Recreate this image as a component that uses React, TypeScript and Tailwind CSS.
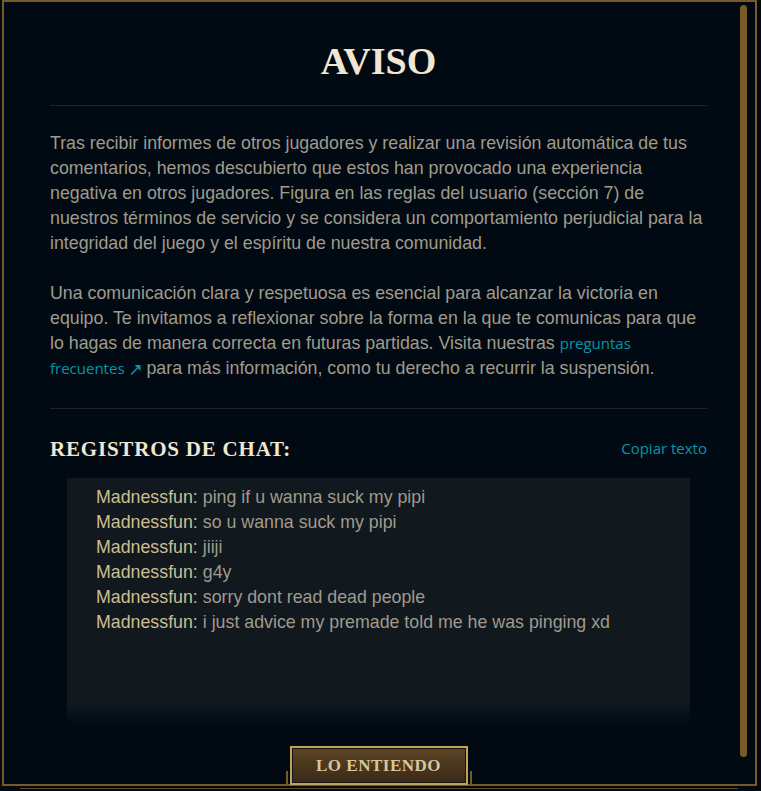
import React from "react";

const serif = "font-['Liberation_Serif',serif]";
const sans = "font-['Liberation_Sans',Arial,sans-serif]";
const uiSans = "font-['Open_Sans','Noto_Sans',sans-serif]";

const chatLines = [
  "ping if u wanna suck my pipi",
  "so u wanna suck my pipi",
  "jiiji",
  "g4y",
  "sorry dont read dead people",
  "i just advice my premade told me he was pinging xd",
];

function ExternalArrow() {
  return (
    <svg width="12" height="12" viewBox="0 0 12 12" className="inline-block ml-[5px] align-[-1px]" aria-hidden>
      <path d="M1.5 11 L9 3.5" stroke="currentColor" strokeWidth="1.6" strokeLinecap="round" fill="none" />
      <path d="M4.5 2 H10.5 V8 Z" fill="currentColor" />
    </svg>
  );
}

export default function App() {
  return (
    <div className="w-[761px] h-[791px] bg-[#010a13] overflow-hidden">
      <div className="ml-[2px] w-[755px] h-[786px] border-2 border-[#785a28] relative">
        {/* scroll thumb */}
        <div className="absolute left-[736px] top-[3px] w-[7px] h-[752px] rounded-full bg-[#785a28]" />

        <div className="pl-[46px] pr-[48px] pt-[40px] flex flex-col">
          <h1 className={`${serif} text-[38px] leading-[38px] font-bold text-[#f0e6d2] text-center`}>AVISO</h1>
          <div className="mt-[25px] h-px bg-[#1e2328]" />

          <div className={`${sans} text-[17.8px] leading-[25px] text-[#a09b8c]`}>
            <p className="mt-[25px]">
              Tras recibir informes de otros jugadores y realizar una revisión automática de tus
              comentarios, hemos descubierto que estos han provocado una experiencia negativa en
              otros jugadores. Figura en las reglas del usuario (sección 7) de nuestros términos de
              servicio y se considera un comportamiento perjudicial para la integridad del juego y
              el espíritu de nuestra comunidad.
            </p>
            <p className="mt-[25px]">
              Una comunicación clara y respetuosa es esencial para alcanzar la victoria en equipo.
              Te invitamos a reflexionar sobre la forma en la que te comunicas para que lo hagas de
              manera correcta en futuras partidas. Visita nuestras{" "}
              <a className={`${uiSans} text-[15px] leading-[20px] text-[#0596aa]`}>
                preguntas frecuentes
                <ExternalArrow />
              </a>{" "}
              para más información, como tu derecho a recurrir la suspensión.
            </p>
          </div>

          <div className="mt-[27px] h-px bg-[#1e2328]" />

          <div className="mt-[26px] h-[28px] flex items-baseline justify-between">
            <h2 className={`${serif} text-[21px] leading-[28px] font-bold tracking-[0.8px] text-[#f0e6d2]`}>
              REGISTROS DE CHAT:
            </h2>
            <a className={`${uiSans} text-[15px] leading-[20px] text-[#0596aa] relative -top-[2px]`}>Copiar texto</a>
          </div>

          <div className="mt-[15px] mx-[17px] h-[247px] pt-[7px] pl-[29px] bg-linear-to-b from-[#11181e] from-[91%] to-[#010a13]">
            {chatLines.map((line, i) => (
              <div key={i} className={`${sans} text-[17.8px] leading-[25px] text-[#a09b8c] whitespace-nowrap`}>
                <span className="text-[#cdbe91]">Madnessfun:</span> {line}
              </div>
            ))}
          </div>

          <div className="mt-[21px] flex justify-center">
            <div className="relative">
              <span className="absolute left-[-4px] bottom-0 w-[2px] h-[14px] bg-[#785a28]" />
              <span className="absolute right-[-4px] bottom-0 w-[2px] h-[14px] bg-[#785a28]" />
              <button className="w-[178px] h-[39px] border-2 border-[#c4a15a] bg-[#1a140d] p-px">
                <span
                  className={`${serif} flex h-full w-full items-center justify-center bg-linear-to-b from-[#5c4426] to-[#3a2a17] text-[17px] font-bold tracking-[0.5px] text-[#d6c79b]`}
                >
                  LO ENTIENDO
                </span>
              </button>
            </div>
          </div>
        </div>
      </div>
      <div className="ml-[20px] mt-[2px] w-[718px] h-px bg-[#5b4a2c]" />
    </div>
  );
}
